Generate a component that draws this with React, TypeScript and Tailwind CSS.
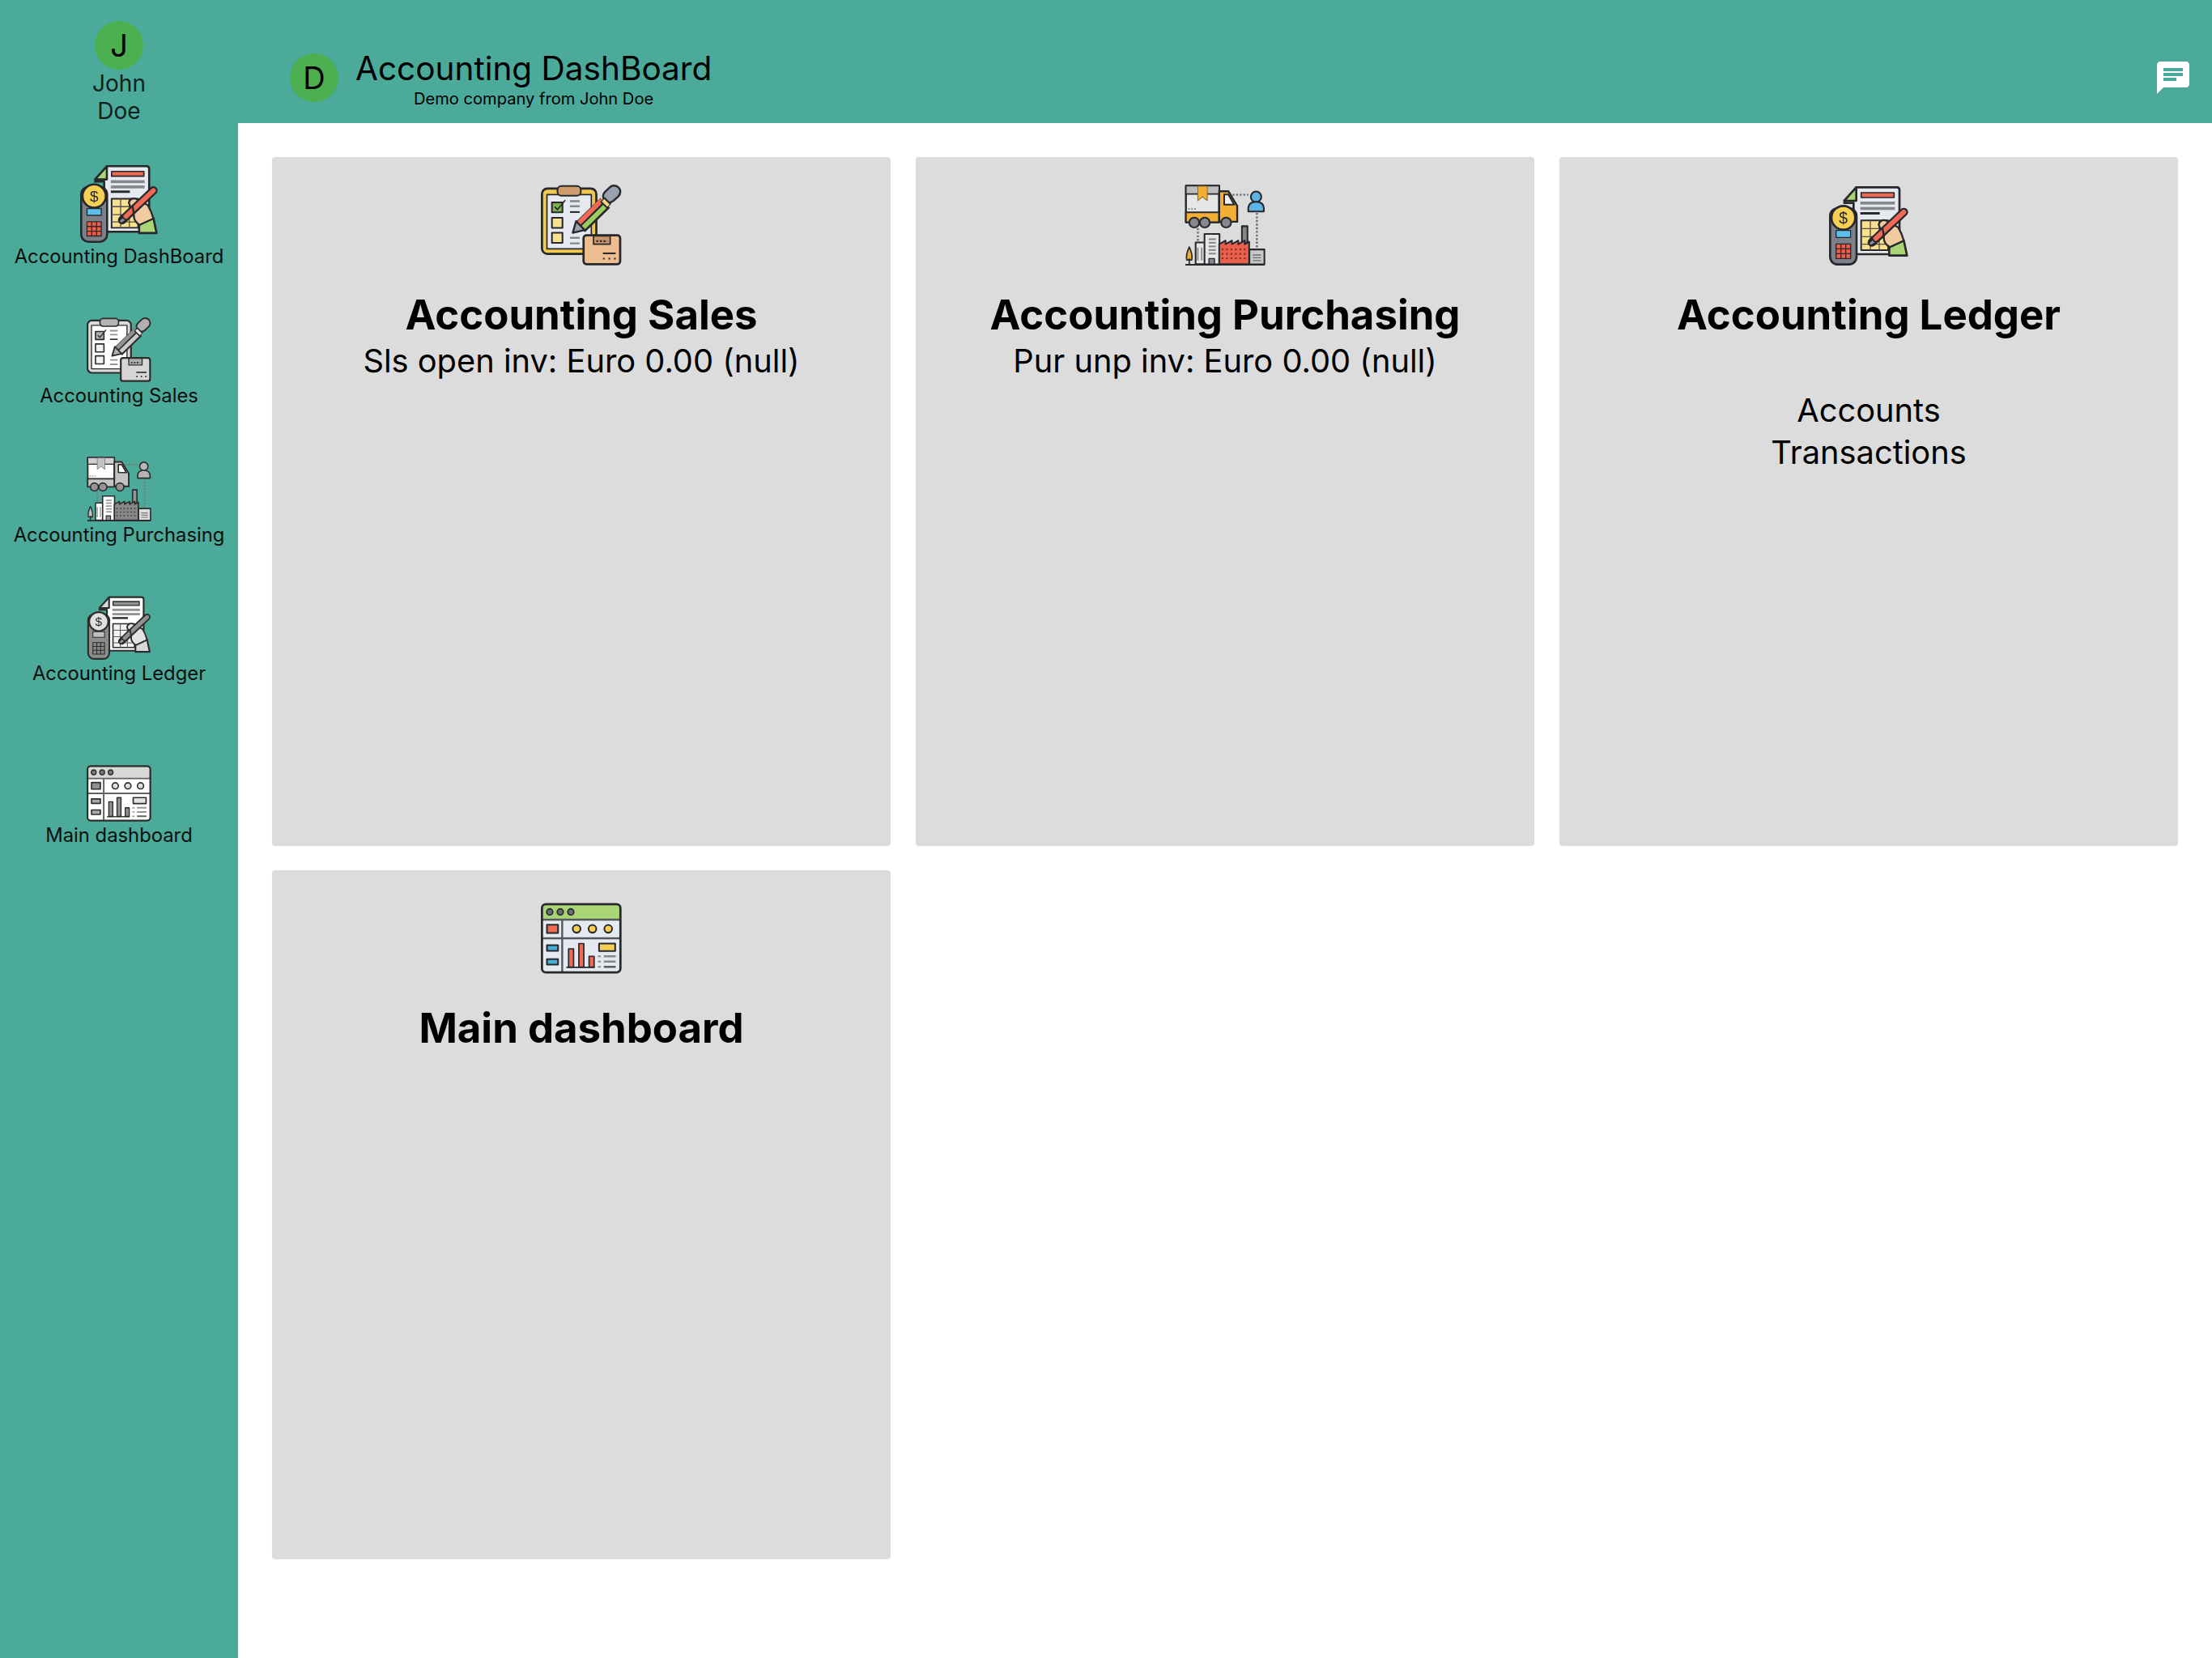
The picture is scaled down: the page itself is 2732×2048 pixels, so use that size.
import React from "react";

const K = "#26282c";

function Coin({ cx, cy, r }: { cx: number; cy: number; r: number }) {
  return (
    <g>
      <circle cx={cx} cy={cy} r={r} fill="#f7cf52" stroke={K} strokeWidth="8" />
      <text x={cx} y={cy + 21} textAnchor="middle" fontSize="58" fontFamily="Liberation Sans, sans-serif" fill={K}>$</text>
    </g>
  );
}

function LedgerIcon({ className }: { className: string }) {
  return (
    <svg viewBox="58 82 296 300" className={className} strokeLinejoin="round">
      <path d="M160 92H310Q320 92 320 102V340H150V150H115Z" fill="#e6e9f0" stroke={K} strokeWidth="8" />
      <path d="M160 92L115 142H160Z" fill="#a9d574" stroke={K} strokeWidth="8" />
      <rect x="178" y="112" width="122" height="18" fill="#ee6a55" stroke={K} strokeWidth="5" />
      <rect x="175" y="145" width="128" height="11" fill="#85878c" />
      <rect x="175" y="165" width="128" height="11" fill="#85878c" />
      <rect x="175" y="184" width="72" height="9" fill={K} />
      <rect x="178" y="215" width="100" height="110" fill="#f8e08e" stroke={K} strokeWidth="6" />
      <path d="M178 245H278M178 275H278M178 303H278M212 215V325M245 215V325" stroke="#55504a" strokeWidth="4" />
      <rect x="63" y="170" width="98" height="208" rx="28" fill="#7b8089" stroke={K} strokeWidth="8" />
      <rect x="85" y="252" width="54" height="26" fill="#5cc0ea" stroke={K} strokeWidth="4" />
      <rect x="85" y="302" width="54" height="54" fill="#e8604c" stroke={K} strokeWidth="4" />
      <path d="M103 302V356M121 302V356M85 320H139M85 338H139" stroke={K} strokeWidth="4" />
      <Coin cx={112} cy={205} r={44} />
      <path d="M282 312L336 288L348 345H282Z" fill="#a9d574" stroke={K} strokeWidth="8" />
      <path d="M243 230Q250 208 272 216L315 240Q330 265 336 290L284 314Q262 300 262 280Z" fill="#f0cba0" stroke={K} strokeWidth="7" />
      <path d="M218 296L336 184" stroke={K} strokeWidth="32" strokeLinecap="round" />
      <path d="M232 282L336 184" stroke="#ee6a55" strokeWidth="18" strokeLinecap="round" />
      <path d="M205 300L220 285L232 297L214 308Z" fill="#8d9299" stroke={K} strokeWidth="5" />
      <path d="M256 240Q262 262 262 282" fill="none" stroke={K} strokeWidth="7" />
    </svg>
  );
}

function SalesIcon({ className }: { className: string }) {
  return (
    <svg viewBox="58 58 292 292" className={className} strokeLinejoin="round">
      <rect x="62" y="72" width="196" height="236" rx="20" fill="#f0c94e" stroke={K} strokeWidth="8" />
      <rect x="80" y="94" width="160" height="196" fill="#e6e9f0" stroke={K} strokeWidth="5" />
      <rect x="118" y="63" width="84" height="35" rx="14" fill="#cf9c6e" stroke={K} strokeWidth="6" />
      <rect x="98" y="122" width="38" height="36" fill="#7fb24d" stroke={K} strokeWidth="6" />
      <path d="M108 138L118 148L146 114" fill="none" stroke={K} strokeWidth="5" />
      <rect x="98" y="178" width="38" height="36" fill="#f8e08e" stroke={K} strokeWidth="6" />
      <rect x="98" y="232" width="38" height="36" fill="#f8e08e" stroke={K} strokeWidth="6" />
      <path d="M163 118H198M163 136H198" stroke="#85878c" strokeWidth="7" />
      <path d="M163 157H198" stroke={K} strokeWidth="6" />
      <path d="M163 250H198M163 270H198" stroke="#85878c" strokeWidth="7" />
      <path d="M305 100L322 84" stroke={K} strokeWidth="52" strokeLinecap="round" />
      <path d="M305 100L322 84" stroke="#98a1ae" strokeWidth="38" strokeLinecap="round" />
      <path d="M200 212L290 124" stroke={K} strokeWidth="50" />
      <path d="M192 200L278 114" stroke="#ee6a55" strokeWidth="17" />
      <path d="M208 216L296 130" stroke="#9ccb62" strokeWidth="17" />
      <path d="M173 232L185 190L216 222Z" fill="#98a1ae" stroke={K} strokeWidth="7" />
      <path d="M280 112L304 136" stroke={K} strokeWidth="24" />
      <path d="M282 114L302 134" stroke="#f3d675" strokeWidth="12" />
      <rect x="212" y="241" width="132" height="104" rx="10" fill="#eebd8f" stroke={K} strokeWidth="8" />
      <rect x="248" y="243" width="60" height="30" fill="#c9956a" stroke={K} strokeWidth="5" />
      <path d="M258 262H298" stroke={K} strokeWidth="6" strokeDasharray="7 6" />
      <path d="M282 306H328" stroke={K} strokeWidth="6" />
      <path d="M282 325H328" stroke={K} strokeWidth="6" strokeDasharray="6 14" />
    </svg>
  );
}

function PurchasingIcon({ className }: { className: string }) {
  const windows = [];
  for (let y = 282; y < 345; y += 13) {
    windows.push(<rect key={y} x="219" y={y} width="26" height="6" fill="#85878c" />);
  }
  return (
    <svg viewBox="132 88 292 292" className={className} strokeLinejoin="round">
      <path d="M305 125H362M393 190V316M180 245V296" stroke="#6b6d70" strokeWidth="7" strokeDasharray="7 6" fill="none" />
      <rect x="137" y="92" width="120" height="132" fill="#e6e6e6" stroke={K} strokeWidth="7" />
      <rect x="137" y="92" width="120" height="30" fill="#bdbdbd" stroke={K} strokeWidth="5" />
      <path d="M180 94H214V146L197 132L180 146Z" fill="#f3ae36" stroke="#8a6a2a" strokeWidth="3" />
      <rect x="137" y="188" width="120" height="36" fill="#f3ae36" stroke={K} strokeWidth="6" />
      <path d="M257 112H290L322 165V222H257Z" fill="#f3ae36" stroke={K} strokeWidth="7" />
      <path d="M275 124H290L311 160H275Z" fill="#eef0f3" stroke={K} strokeWidth="6" />
      <path d="M145 176H178" stroke="#85878c" strokeWidth="5" strokeDasharray="6 5" />
      <circle cx="167" cy="225" r="18" fill="#85878c" stroke={K} strokeWidth="6" />
      <circle cx="205" cy="225" r="18" fill="#85878c" stroke={K} strokeWidth="6" />
      <circle cx="282" cy="225" r="18" fill="#85878c" stroke={K} strokeWidth="6" />
      <circle cx="390" cy="132" r="19" fill="#5cb4e6" stroke={K} strokeWidth="6" />
      <path d="M362 185V172Q364 150 390 150Q416 150 418 172V185Z" fill="#5cb4e6" stroke={K} strokeWidth="6" />
      <rect x="172" y="297" width="36" height="78" fill="#e6e6e6" stroke={K} strokeWidth="6" />
      <rect x="204" y="266" width="54" height="110" fill="#e6e6e6" stroke={K} strokeWidth="6" />
      {windows}
      <rect x="220" y="355" width="20" height="20" fill="#85878c" stroke={K} strokeWidth="4" />
      <path d="M180 315V362M194 315V362" stroke="#85878c" strokeWidth="5" />
      <path d="M149 313Q162 340 158 360H140Q136 340 149 313Z" fill="#f3ae36" stroke={K} strokeWidth="5" />
      <path d="M149 355V376" stroke={K} strokeWidth="5" />
      <rect x="339" y="238" width="20" height="60" fill="#85878c" stroke={K} strokeWidth="6" />
      <path d="M257 375V303L280 290V303L303 290V303L326 290V303L349 290V303L365 294V375Z" fill="#e8604c" stroke={K} strokeWidth="6" />
      <path d="M266 322H358M266 338H358M266 354H358" stroke="#8a2a20" strokeWidth="6" strokeDasharray="6 10" />
      <rect x="366" y="322" width="54" height="54" fill="#c9c9c9" stroke={K} strokeWidth="6" />
      <path d="M378 342H408M378 352H408M378 362H408" stroke="#6b6d70" strokeWidth="4" />
      <path d="M135 377H420" stroke={K} strokeWidth="6" />
    </svg>
  );
}

function DashboardIcon({ className }: { className: string }) {
  return (
    <svg viewBox="58 80 292 254" className={className} strokeLinejoin="round">
      <rect x="62" y="84" width="283" height="246" rx="14" fill="#e6e9f0" />
      <path d="M62 140V98Q62 84 76 84H331Q345 84 345 98V140Z" fill="#a9d574" />
      <circle cx="90" cy="112" r="11" fill="#6b6f75" stroke={K} strokeWidth="5" />
      <circle cx="128" cy="112" r="11" fill="#6b6f75" stroke={K} strokeWidth="5" />
      <circle cx="166" cy="112" r="11" fill="#6b6f75" stroke={K} strokeWidth="5" />
      <path d="M62 140H345M62 207H345M135 140V330" stroke="#55585e" strokeWidth="7" />
      <rect x="62" y="84" width="283" height="246" rx="14" fill="none" stroke={K} strokeWidth="8" />
      <rect x="80" y="158" width="40" height="30" fill="#ee6a55" stroke={K} strokeWidth="6" />
      <circle cx="187" cy="173" r="14" fill="#f7cf52" stroke={K} strokeWidth="6" />
      <circle cx="244" cy="173" r="14" fill="#f7cf52" stroke={K} strokeWidth="6" />
      <circle cx="301" cy="173" r="14" fill="#f7cf52" stroke={K} strokeWidth="6" />
      <rect x="80" y="232" width="40" height="20" fill="#45aed6" stroke={K} strokeWidth="6" />
      <rect x="80" y="282" width="40" height="20" fill="#45aed6" stroke={K} strokeWidth="6" />
      <rect x="158" y="245" width="18" height="66" fill="#ee6a55" stroke={K} strokeWidth="5" />
      <rect x="195" y="226" width="18" height="85" fill="#ee6a55" stroke={K} strokeWidth="5" />
      <rect x="232" y="272" width="18" height="39" fill="#ee6a55" stroke={K} strokeWidth="5" />
      <path d="M150 312H252" stroke={K} strokeWidth="5" />
      <rect x="268" y="226" width="58" height="27" fill="#f7cf52" stroke={K} strokeWidth="6" />
      <path d="M285 272H328M285 291H328" stroke="#85878c" strokeWidth="7" />
      <path d="M285 310H328" stroke="#55585e" strokeWidth="7" />
      <path d="M264 272H274M264 291H274M264 310H274" stroke="#85878c" strokeWidth="6" />
    </svg>
  );
}

function Avatar({ letter, className }: { letter: string; className?: string }) {
  return (
    <div className={`flex h-[60px] w-[60px] shrink-0 items-center justify-center rounded-full bg-[#4caf50] text-[38px] leading-none text-black ${className ?? ""}`}>
      {letter}
    </div>
  );
}

function SideItem({ children, label, className }: { children: React.ReactNode; label: string; className: string }) {
  return (
    <div className={`flex flex-col items-center ${className}`}>
      {children}
      <div className="mt-[2px] h-[30px] whitespace-nowrap text-[23.8px] leading-[30px] text-[#0b0f0e]">{label}</div>
    </div>
  );
}

function Card({ icon, title, children }: { icon: React.ReactNode; title: string; children?: React.ReactNode }) {
  return (
    <div className="flex h-[850px] flex-col items-center rounded-[4px] bg-[#dcdcdc] pt-[34px] shadow-[0_1px_1px_rgba(0,0,0,0.14)]">
      {icon}
      <div className="mt-[28px] text-[50.9px] font-bold leading-[66px] text-black">{title}</div>
      {children}
    </div>
  );
}

export default function App() {
  return (
    <div className="flex h-[2048px] w-[2732px] bg-white font-['Inter','Noto_Sans',sans-serif]">
      <aside className="flex w-[294px] shrink-0 flex-col items-center bg-[#4caa9b] pt-[26px]">
        <Avatar letter="J" />
        <div className="text-center text-[28px] leading-[34px] text-[#0e1f1c]">
          John
          <br />
          Doe
        </div>
        <SideItem label="Accounting DashBoard" className="mt-[48px]">
          <LedgerIcon className="h-[98px] w-[98px] blur-[0.6px]" />
        </SideItem>
        <SideItem label="Accounting Sales" className="mt-[60px]">
          <SalesIcon className="h-[80px] w-[80px] blur-[0.6px] grayscale brightness-110" />
        </SideItem>
        <SideItem label="Accounting Purchasing" className="mt-[60px]">
          <PurchasingIcon className="h-[80px] w-[80px] blur-[0.6px] grayscale brightness-110" />
        </SideItem>
        <SideItem label="Accounting Ledger" className="mt-[59px]">
          <LedgerIcon className="h-[80px] w-[80px] blur-[0.6px] grayscale brightness-110" />
        </SideItem>
        <SideItem label="Main dashboard" className="mt-[98px]">
          <DashboardIcon className="h-[70px] w-[80px] blur-[0.6px] grayscale brightness-110" />
        </SideItem>
      </aside>
      <div className="flex min-w-0 flex-1 flex-col">
        <header className="relative flex h-[152px] shrink-0 items-start bg-[#4caa9b] pl-[64px] pt-[60px]">
          <Avatar letter="D" className="mt-[6px]" />
          <div className="ml-[21px] flex flex-col items-center">
            <div className="text-[40.5px] leading-[50px] text-black">Accounting DashBoard</div>
            <div className="text-[20.1px] leading-[24px] text-black">Demo company from John Doe</div>
          </div>
          <svg viewBox="0 0 24 24" className="absolute right-[24px] top-[72px] h-[48px] w-[48px]" fill="#ffffff">
            <path d="M20 2H4c-1.1 0-1.99.9-1.99 2L2 22l4-4h14c1.1 0 2-.9 2-2V4c0-1.1-.9-2-2-2zM6 9h12v2H6V9zm8 5H6v-2h8v2zm4-6H6V6h12v2z" />
          </svg>
        </header>
        <main className="grid grid-cols-[repeat(3,764px)] content-start gap-[31px] pl-[42px] pt-[42px]">
          <Card icon={<SalesIcon className="h-[100px] w-[100px] blur-[0.6px]" />} title="Accounting Sales">
            <div className="text-[39.8px] leading-[48px] text-black">Sls open inv: Euro 0.00 (null)</div>
          </Card>
          <Card icon={<PurchasingIcon className="h-[100px] w-[100px] blur-[0.6px]" />} title="Accounting Purchasing">
            <div className="text-[39.8px] leading-[48px] text-black">Pur unp inv: Euro 0.00 (null)</div>
          </Card>
          <Card icon={<LedgerIcon className="h-[100px] w-[100px] blur-[0.6px]" />} title="Accounting Ledger">
            <div className="mt-[59px] text-center text-[39.8px] leading-[52px] text-black">
              Accounts
              <br />
              Transactions
            </div>
          </Card>
          <Card icon={<DashboardIcon className="h-[100px] w-[100px] blur-[0.6px]" />} title="Main dashboard" />
        </main>
      </div>
    </div>
  );
}
